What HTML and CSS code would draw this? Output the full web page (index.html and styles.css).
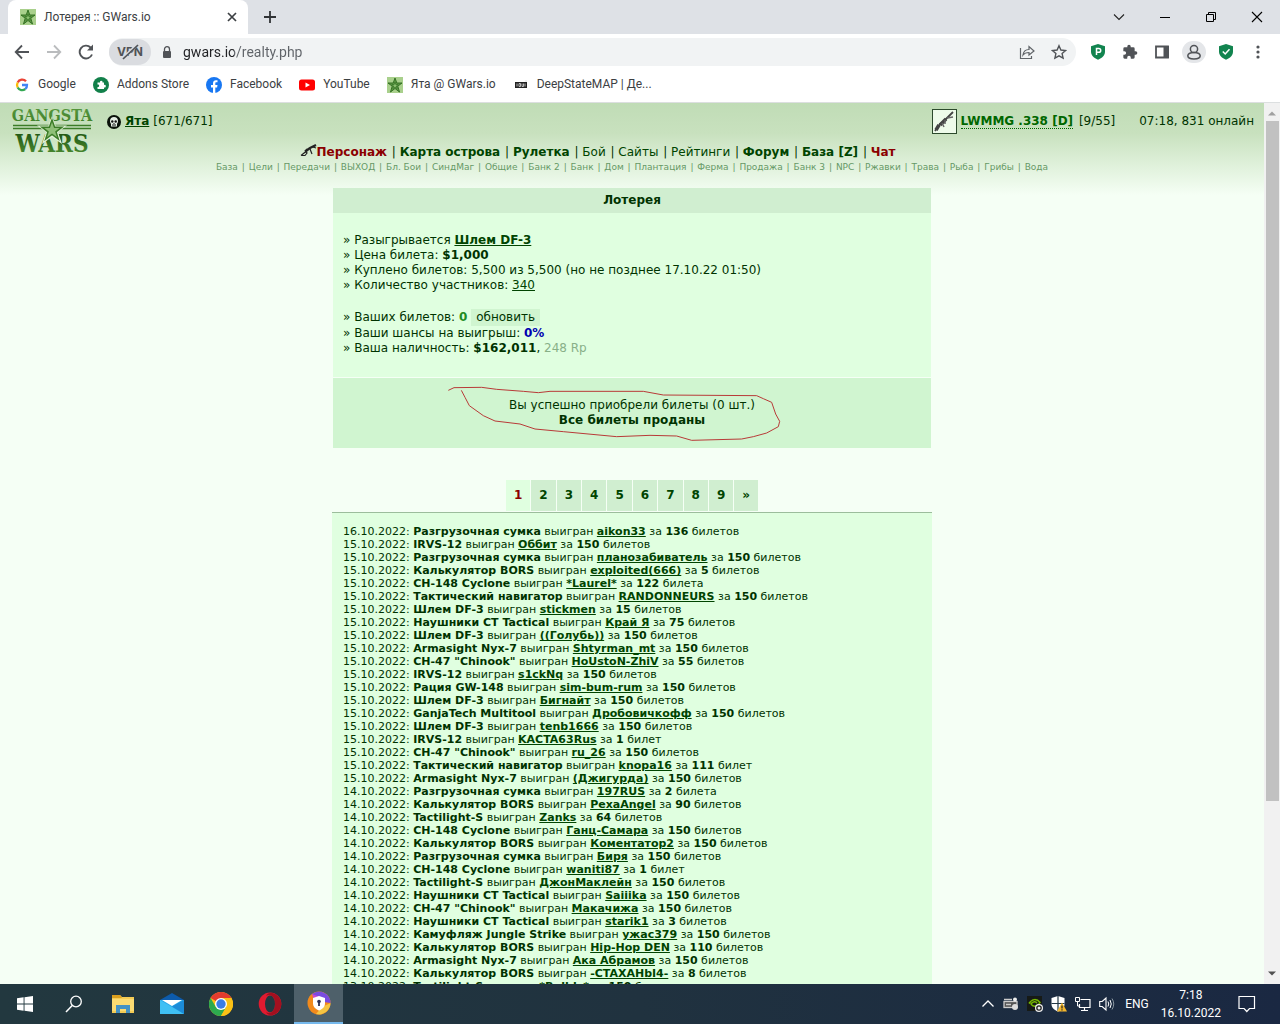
FILE: index.html
```html
<!DOCTYPE html>
<html lang="ru">
<head>
<meta charset="utf-8">
<title>Лотерея :: GWars.io</title>
<link rel="stylesheet" href="styles.css">
</head>
<body>
<svg class="defs" width="0" height="0" aria-hidden="true">
  <symbol id="star" viewBox="0 0 16 16">
    <rect width="16" height="16" fill="#a9d08c"/>
    <path d="M8 1l1.800 5H15l-4.200 3.200L12.500 15 8 11.500 3.500 15l1.700-5.800L1 6h5.200z" fill="#5f9a45" stroke="#2c6a1e" stroke-width=".9"/>
    <path d="M8 5l.8 2.500h2.400L9.300 9l.8 2.500L8 10l-2.100 1.500.8-2.500-1.900-1.500h2.400z" fill="#8cc070" stroke="#2c6a1e" stroke-width=".6"/>
  </symbol>
</svg>

<div class="tabs">
  <div class="tab">
    <svg class="i16" viewBox="0 0 16 16"><use href="#star"/></svg>
    <span class="tab-title">Лотерея :: GWars.io</span>
    <button class="ico" aria-label="Закрыть вкладку"><svg width="10" height="10" viewBox="0 0 10 10"><path d="M1 1l8 8M9 1L1 9" stroke="#3c4043" stroke-width="1.700"/></svg></button>
  </div>
  <button class="ico new-tab" aria-label="Новая вкладка"><svg width="12" height="12" viewBox="0 0 12 12"><path d="M6 0v12M0 6h12" stroke="#303336" stroke-width="1.800"/></svg></button>
  <div class="win">
    <button class="ico" aria-label="Поиск вкладок"><svg width="12" height="12" viewBox="0 0 12 12"><path d="M1 3.500l5 5 5-5" fill="none" stroke="#222" stroke-width="1.100"/></svg></button>
    <button class="ico" aria-label="Свернуть"><svg width="12" height="12" viewBox="0 0 12 12"><path d="M1 6.500h10" stroke="#000"/></svg></button>
    <button class="ico" aria-label="Окно"><svg width="12" height="12" viewBox="0 0 12 12"><path d="M1.500 3.500h7v7h-7zM3.500 3.500v-2h7v7h-2" fill="none" stroke="#000"/></svg></button>
    <button class="ico" aria-label="Закрыть"><svg width="12" height="12" viewBox="0 0 12 12"><path d="M1 1l10 10M11 1L1 11" stroke="#000" stroke-width="1.100"/></svg></button>
  </div>
</div>

<div class="toolbar">
  <button class="ico" aria-label="Назад"><svg width="16" height="16" viewBox="0 0 16 16"><path d="M15 8H2M8 1.500L1.700 8 8 14.500" fill="none" stroke="#505357" stroke-width="1.800"/></svg></button>
  <button class="ico" aria-label="Вперёд"><svg width="16" height="16" viewBox="0 0 16 16"><path d="M1 8h13M8 1.500L14.300 8 8 14.500" fill="none" stroke="#babcbe" stroke-width="1.800"/></svg></button>
  <button class="ico" aria-label="Обновить страницу"><svg width="16" height="16" viewBox="0 0 16 16"><path d="M14 10.500A6.400 6.400 0 1 1 12.600 3.500L14 5" fill="none" stroke="#505357" stroke-width="1.900"/><path d="M15 0.500v6H9z" fill="#505357"/></svg></button>
  <div class="omnibox">
    <button class="vpn" aria-label="VPN"><svg width="28" height="16" viewBox="0 0 28 16"><text x="1" y="12" font-family="Inter" font-size="12" font-weight="700" fill="#505357">VPN</text><path d="M6 15L21 1" stroke="#dadce0" stroke-width="3"/><path d="M7 15L22 1" stroke="#505357" stroke-width="1.700"/></svg></button>
    <svg class="lock" width="10" height="12" viewBox="0 0 10 12"><rect x="1" y="5" width="8" height="7" rx="1" fill="#505357"/><path d="M2.500 5V3.200a2.500 2.500 0 0 1 5 0V5" fill="none" stroke="#505357" stroke-width="1.300"/></svg>
    <input class="url" type="text" aria-label="Адрес" value="gwars.io/realty.php">
    <button class="ico" aria-label="Поделиться"><svg width="16" height="16" viewBox="0 0 16 16"><path d="M1.500 4v10.500h11V12M4 11c.5-4 3-5.500 6-5.500V2.500L15 7l-5 4V8.500C7.500 8.500 5.500 9 4 11z" fill="none" stroke="#606468" stroke-width="1.200"/></svg></button>
    <button class="ico" aria-label="В закладки"><svg width="16" height="16" viewBox="0 0 16 16"><path d="M8 1.700l1.900 4.300 4.700.5-3.500 3.100 1 4.600L8 11.800l-4.100 2.400 1-4.600L1.400 6.500l4.700-.5z" fill="none" stroke="#505357" stroke-width="1.400"/></svg></button>
  </div>
  <div class="ext">
    <button class="ico" aria-label="Блокировщик"><svg width="16" height="18" viewBox="0 0 16 18"><path d="M8 1l7 2.200v5.300c0 4-3 6.700-7 8.200-4-1.500-7-4.200-7-8.200V3.200z" fill="#12844f"/><path d="M6.500 12V5.500h2.300a1.900 1.900 0 0 1 0 3.800H6.500" fill="none" stroke="#fff" stroke-width="1.500"/></svg></button>
    <button class="ico" aria-label="Расширения"><svg width="16" height="16" viewBox="0 0 24 24"><path fill="#505357" d="M20.500 11H19V7a2 2 0 0 0-2-2h-4V3.500a2.500 2.500 0 0 0-5 0V5H4a2 2 0 0 0-2 2v3.800h1.500a2.700 2.700 0 0 1 0 5.400H2V20c0 1.100.9 2 2 2h3.800v-1.500a2.700 2.700 0 0 1 5.400 0V22H17a2 2 0 0 0 2-2v-4h1.500a2.500 2.500 0 0 0 0-5z"/></svg></button>
    <button class="ico" aria-label="Боковая панель"><svg width="16" height="16" viewBox="0 0 16 16"><path d="M2 2.500h12v11H2z" fill="none" stroke="#505357" stroke-width="1.800"/><path d="M9.500 2H15v12H9.500z" fill="#505357"/></svg></button>
    <button class="ico round" aria-label="Профиль"><svg width="16" height="16" viewBox="0 0 16 16"><circle cx="8" cy="5" r="3.600" fill="none" stroke="#505357" stroke-width="1.500"/><path d="M1.800 11.800C2 9.300 5 8.500 8 8.500s6 .8 6.200 3.300c0 2.200-3 3.200-6.200 3.200s-6.200-1-6.200-3.200z" fill="none" stroke="#505357" stroke-width="1.500"/></svg></button>
    <button class="ico" aria-label="Защита"><svg width="16" height="18" viewBox="0 0 16 18"><path d="M8 1l7 2.200v5.300c0 4-3 6.700-7 8.200-4-1.500-7-4.200-7-8.200V3.200z" fill="#12844f"/><path d="M4.800 8.500L7.200 11l4.300-4.800" fill="none" stroke="#fff" stroke-width="1.500"/></svg></button>
    <button class="ico" aria-label="Меню"><svg width="16" height="16" viewBox="0 0 16 16"><circle cx="8" cy="3" r="1.600" fill="#505357"/><circle cx="8" cy="8" r="1.600" fill="#505357"/><circle cx="8" cy="13" r="1.600" fill="#505357"/></svg></button>
  </div>
</div>

<nav class="bookmarks">
  <a href="#"><svg class="i16" viewBox="0 0 16 16" fill="none" stroke-width="2.300"><path d="M12 4.300A5 5 0 0 0 3.700 5.500" stroke="#ea4335"/><path d="M3.700 5.500a5 5 0 0 0 0 5" stroke="#fbbc05"/><path d="M3.700 10.500A5 5 0 0 0 11.300 12" stroke="#34a853"/><path d="M11.300 12A5 5 0 0 0 13 8H8" stroke="#4285f4"/></svg>Google</a>
  <a href="#"><svg class="i16" viewBox="0 0 16 16"><circle cx="8" cy="8" r="8" fill="#12804a"/><path d="M4.500 5.500H7a1.300 1.300 0 1 1 2.500 0H11V8a1.300 1.300 0 1 1 0 2.400V12H4.500v-2a1.300 1.300 0 1 0 0-2.500z" fill="#fff"/></svg>Addons Store</a>
  <a href="#"><svg class="i16" viewBox="0 0 16 16"><circle cx="8" cy="8" r="8" fill="#1877f2"/><path d="M7 16v-5.600H5V8h2V6.300C7 4.200 8.200 3.200 10 3.200l1.500.1v2h-1C9.500 5.300 9.300 5.800 9.300 6.500V8h2.200l-.4 2.400H9.300V16z" fill="#fff"/></svg>Facebook</a>
  <a href="#"><svg class="i16" viewBox="0 0 16 16"><rect y="2.500" width="16" height="11" rx="2.500" fill="#f00"/><path d="M6.500 5.500L11 8l-4.500 2.500z" fill="#fff"/></svg>YouTube</a>
  <a href="#"><svg class="i16" viewBox="0 0 16 16"><use href="#star"/></svg>Ята @ GWars.io</a>
  <a href="#"><svg class="i16" viewBox="0 0 16 16"><rect x="2" y="5" width="12" height="6" fill="#222"/><path d="M4 6.500v3M6 6.500h1.500v3H6zM9 6.500v3h1.500v-3M12 6.500v3M12 4h2" stroke="#ddd" stroke-width=".8" fill="none"/></svg>DeepStateMAP | Де...</a>
</nav>

<div class="view">
<main class="page">
  <header class="top">
    <div class="who">
      <svg class="logo" width="84" height="54" viewBox="0 0 84 54" role="img" aria-label="Gangsta Wars">
        <defs><linearGradient id="g1" x1="0" y1="0" x2="0" y2="1"><stop offset="0" stop-color="#5a9a40"/><stop offset="1" stop-color="#3c7d28"/></linearGradient><linearGradient id="g2" x1="0" y1="0" x2="0" y2="1"><stop offset="0" stop-color="#1c4f10"/><stop offset="1" stop-color="#4f9234"/></linearGradient></defs>
        <text x="42" y="14" text-anchor="middle" class="logo-a" fill="url(#g1)">GANGSTA</text>
        <path d="M3 18.500h78M3 21.500h78" stroke="#3c7d28" stroke-width="1.600"/>
        <text x="42" y="45" text-anchor="middle" class="logo-b" fill="url(#g2)">WARS</text>
        <path d="M42 9l3.600 9.500H57l-9 6.500 4 12-10-7-10 7 4-12-9-6.500h11.400z" fill="#e2f2d8"/>
        <path d="M42 13l2.600 7.200H52l-6 4.600 2.300 7.200-6.300-4.500-6.300 4.500 2.300-7.200-6-4.600h7.400z" fill="#8fbf78" stroke="#3c7d28" stroke-width="1.500"/>
      </svg>
      <span class="player"><svg width="14" height="14" viewBox="0 0 14 14"><circle cx="7" cy="7" r="7" fill="#0a120a"/><path d="M3 6c0-2.500 1.700-4 4-4s4 1.500 4 4c0 1.500-.6 2-1 3v2.500H4V9C3.600 8 3 7.500 3 6z" fill="#e4eee4"/><circle cx="5.300" cy="6.500" r="1.200" fill="#111"/><circle cx="8.700" cy="6.500" r="1.200" fill="#111"/><path d="M5 10h4M7 8v1" stroke="#111"/></svg> <a href="#"><b>Ята</b></a> [671/671]</span>
    </div>
    <div class="info">
      <svg width="25" height="25" viewBox="0 0 25 25"><rect x=".5" y=".5" width="24" height="24" fill="#eefbea" stroke="#2c4a2c"/><path d="M3 22l5-7 3-2 10-10" fill="none" stroke="#444" stroke-width="1.800"/><path d="M4 21l3-5M8 16l6-6" stroke="#444" stroke-width="3.500"/><path d="M10 14l2 4M15 9l6-1M13 11v4" stroke="#666" stroke-width="1.500"/></svg>
      <span class="gun"><a href="#">LWMMG .338 [D]</a> [9/55]</span>
      <span>07:18, 831 онлайн</span>
    </div>
  </header>

  <nav class="menu">
    <svg width="17" height="13" viewBox="0 0 17 13"><path d="M5 7.500l5-3.500 6-3" fill="none" stroke="#222" stroke-width="2.200"/><path d="M1 11.500l5-4 1 1.500-2 2.500H1M10 5l2 5M6 5l2 2M13 3l3 1" fill="none" stroke="#222" stroke-width="1.200"/></svg><a class="red" href="#">Персонаж</a> | <a class="b" href="#">Карта острова</a> | <a class="b" href="#">Рулетка</a> | <a href="#">Бой</a> | <a href="#">Сайты</a> | <a href="#">Рейтинги</a> | <a class="b" href="#">Форум</a> | <a class="b" href="#">База [Z]</a> | <a class="red" href="#">Чат</a>
  </nav>
  <nav class="submenu"><a href="#">База</a> | <a href="#">Цели</a> | <a href="#">Передачи</a> | <a href="#">ВЫХОД</a> | <a href="#">Бл. Бои</a> | <a href="#">СиндМаг</a> | <a href="#">Общие</a> | <a href="#">Банк 2</a> | <a href="#">Банк</a> | <a href="#">Дом</a> | <a href="#">Плантация</a> | <a href="#">Ферма</a> | <a href="#">Продажа</a> | <a href="#">Банк 3</a> | <a href="#">NPC</a> | <a href="#">Ржавки</a> | <a href="#">Трава</a> | <a href="#">Рыба</a> | <a href="#">Грибы</a> | <a href="#">Вода</a></nav>

  <section class="lottery">
    <h1>Лотерея</h1>
    <div class="facts">
      <p>» Разыгрывается <a href="#"><b>Шлем DF-3</b></a></p>
      <p>» Цена билета: <b>$1,000</b></p>
      <p>» Куплено билетов: 5,500 из 5,500 (но не позднее 17.10.22 01:50)</p>
      <p>» Количество участников: <a href="#">340</a></p>
      <p class="mine">» Ваших билетов: <b class="green">0</b> <button class="refresh">обновить</button></p>
      <p>» Ваши шансы на выигрыш: <b class="blue">0%</b></p>
      <p>» Ваша наличность: <b>$162,011</b>, <span class="rp">248 Rp</span></p>
    </div>
    <div class="message">
      <p>Вы успешно приобрели билеты (0 шт.)</p>
      <p><b>Все билеты проданы</b></p>
      <svg class="scribble" viewBox="9 582 1794 210" aria-hidden="true"><path d="M355 619L372 611 455 610 500 616 580 622 625 626 660 622 940 622 1000 633 1280 635 1300 644 1325 655 1337 690 1349 712 1345 728 1310 747 1270 758 1235 765 1085 769 1040 756 960 754 860 758 700 743 615 735 570 720 495 711 460 695 418 665 405 640 394 619" fill="none" stroke="#b83a38" stroke-width="3"/></svg>
    </div>
  </section>

  <nav class="pager"><a class="current" href="#">1</a><a href="#">2</a><a href="#">3</a><a href="#">4</a><a href="#">5</a><a href="#">6</a><a href="#">7</a><a href="#">8</a><a href="#">9</a><a href="#">»</a></nav>

  <ul class="winners">
    <li>16.10.2022: <b>Разгрузочная сумка</b> выигран <a href="#">aikon33</a> за <b>136</b> билетов</li>
    <li>15.10.2022: <b>IRVS-12</b> выигран <a href="#">Оббит</a> за <b>150</b> билетов</li>
    <li>15.10.2022: <b>Разгрузочная сумка</b> выигран <a href="#">планозабиватель</a> за <b>150</b> билетов</li>
    <li>15.10.2022: <b>Калькулятор BORS</b> выигран <a href="#">exploited(666)</a> за <b>5</b> билетов</li>
    <li>15.10.2022: <b>CH-148 Cyclone</b> выигран <a href="#">*Laurel*</a> за <b>122</b> билета</li>
    <li>15.10.2022: <b>Тактический навигатор</b> выигран <a href="#">RANDONNEURS</a> за <b>150</b> билетов</li>
    <li>15.10.2022: <b>Шлем DF-3</b> выигран <a href="#">stickmen</a> за <b>15</b> билетов</li>
    <li>15.10.2022: <b>Наушники CT Tactical</b> выигран <a href="#">Край Я</a> за <b>75</b> билетов</li>
    <li>15.10.2022: <b>Шлем DF-3</b> выигран <a href="#">((Голубь))</a> за <b>150</b> билетов</li>
    <li>15.10.2022: <b>Armasight Nyx-7</b> выигран <a href="#">Shtyrman_mt</a> за <b>150</b> билетов</li>
    <li>15.10.2022: <b>CH-47 "Chinook"</b> выигран <a href="#">HoUstoN-ZhiV</a> за <b>55</b> билетов</li>
    <li>15.10.2022: <b>IRVS-12</b> выигран <a href="#">s1ckNq</a> за <b>150</b> билетов</li>
    <li>15.10.2022: <b>Рация GW-148</b> выигран <a href="#">sim-bum-rum</a> за <b>150</b> билетов</li>
    <li>15.10.2022: <b>Шлем DF-3</b> выигран <a href="#">Бигнайт</a> за <b>150</b> билетов</li>
    <li>15.10.2022: <b>GanjaTech Multitool</b> выигран <a href="#">Дробовичкофф</a> за <b>150</b> билетов</li>
    <li>15.10.2022: <b>Шлем DF-3</b> выигран <a href="#">tenb1666</a> за <b>150</b> билетов</li>
    <li>15.10.2022: <b>IRVS-12</b> выигран <a href="#">KACTA63Rus</a> за <b>1</b> билет</li>
    <li>15.10.2022: <b>CH-47 "Chinook"</b> выигран <a href="#">ru_26</a> за <b>150</b> билетов</li>
    <li>15.10.2022: <b>Тактический навигатор</b> выигран <a href="#">knopa16</a> за <b>111</b> билет</li>
    <li>15.10.2022: <b>Armasight Nyx-7</b> выигран <a href="#">(Джигурда)</a> за <b>150</b> билетов</li>
    <li>14.10.2022: <b>Разгрузочная сумка</b> выигран <a href="#">197RUS</a> за <b>2</b> билета</li>
    <li>14.10.2022: <b>Калькулятор BORS</b> выигран <a href="#">PexaAngel</a> за <b>90</b> билетов</li>
    <li>14.10.2022: <b>Tactilight-S</b> выигран <a href="#">Zanks</a> за <b>64</b> билетов</li>
    <li>14.10.2022: <b>CH-148 Cyclone</b> выигран <a href="#">Ганц-Самара</a> за <b>150</b> билетов</li>
    <li>14.10.2022: <b>Калькулятор BORS</b> выигран <a href="#">Коментатор2</a> за <b>150</b> билетов</li>
    <li>14.10.2022: <b>Разгрузочная сумка</b> выигран <a href="#">Биря</a> за <b>150</b> билетов</li>
    <li>14.10.2022: <b>CH-148 Cyclone</b> выигран <a href="#">waniti87</a> за <b>1</b> билет</li>
    <li>14.10.2022: <b>Tactilight-S</b> выигран <a href="#">ДжонМаклейн</a> за <b>150</b> билетов</li>
    <li>14.10.2022: <b>Наушники CT Tactical</b> выигран <a href="#">Saiiika</a> за <b>150</b> билетов</li>
    <li>14.10.2022: <b>CH-47 "Chinook"</b> выигран <a href="#">Макачижа</a> за <b>150</b> билетов</li>
    <li>14.10.2022: <b>Наушники CT Tactical</b> выигран <a href="#">starik1</a> за <b>3</b> билетов</li>
    <li>14.10.2022: <b>Камуфляж Jungle Strike</b> выигран <a href="#">ужас379</a> за <b>150</b> билетов</li>
    <li>14.10.2022: <b>Калькулятор BORS</b> выигран <a href="#">Hip-Hop DEN</a> за <b>110</b> билетов</li>
    <li>14.10.2022: <b>Armasight Nyx-7</b> выигран <a href="#">Ака Абрамов</a> за <b>150</b> билетов</li>
    <li>14.10.2022: <b>Калькулятор BORS</b> выигран <a href="#">-CTAXAHbI4-</a> за <b>8</b> билетов</li>
    <li>13.10.2022: <b>Tactilight-S</b> выигран <a href="#">*Bulblc*</a> за <b>150</b> билетов</li>
  </ul>
</main>
<div class="scroll" aria-hidden="true">
  <svg width="8" height="5" viewBox="0 0 8 5"><path d="M0 4.500h8L4 .5z" fill="#a0a0a0"/></svg>
  <div class="thumb"></div>
  <svg width="8" height="5" viewBox="0 0 8 5"><path d="M0 .5h8L4 4.500z" fill="#505050"/></svg>
</div>
</div>

<footer class="taskbar">
  <button aria-label="Пуск"><svg width="16" height="16" viewBox="0 0 16 16"><path d="M0 2.300l6.600-1v6.300H0zM7.500 1.200L16 0v7.600H7.500zM0 8.500h6.600v6.200L0 13.800zM7.500 8.500H16V16l-8.500-1.200z" fill="#fff"/></svg></button>
  <button aria-label="Поиск"><svg width="18" height="18" viewBox="0 0 18 18"><circle cx="11" cy="6.500" r="5.300" fill="none" stroke="#fff" stroke-width="1.300"/><path d="M7.200 10.500L1 17" stroke="#fff" stroke-width="1.500"/></svg></button>
  <button aria-label="Проводник"><svg width="22" height="20" viewBox="0 0 22 20"><path d="M0 1h8l2 2h12v16H0z" fill="#f3cb55"/><path d="M0 1h8l2 3H0z" fill="#d99e1e"/><path d="M0 5h22v12H0z" fill="#fbdb72"/><path d="M4 19v-8h14v8h-4v-4H8v4z" fill="#4492c4"/></svg></button>
  <button aria-label="Почта"><svg width="24" height="24" viewBox="0 0 24 24"><path d="M0 8l12-7 12 7v4H0z" fill="#0d5bab"/><path d="M0 8h24v14H0z" fill="#29a8e8"/><path d="M0 8l24 14H0z" fill="#3fc0f4"/><path d="M2 8h20l-10 6z" fill="#fff"/><path d="M12 14.500L24 8v14z" fill="#1c8cd8"/></svg></button>
  <button aria-label="Chrome"><svg width="24" height="24" viewBox="0 0 24 24"><circle cx="12" cy="12" r="12" fill="#fbc116"/><path d="M12 12L1.600 6A12 12 0 0 1 22.400 6H12z" fill="#e33b2e"/><path d="M1.600 6A12 12 0 0 0 12 24l5.200-9L12 12 6.800 15z" fill="#2da94f"/><path d="M12 6h10.400A12 12 0 0 1 12 24l5.200-9z" fill="#fbc116"/><circle cx="12" cy="12" r="6" fill="#fff"/><circle cx="12" cy="12" r="4.700" fill="#3b7de8"/></svg></button>
  <button aria-label="Opera"><svg width="24" height="24" viewBox="0 0 24 24"><ellipse cx="12" cy="12" rx="11.300" ry="11.500" fill="#e01b30"/><path d="M14 .7a11.500 11.500 0 0 1 0 22.600c-3 0-5-1-6-3 6 3 9-3 9-8.300S14 1 8 3.700c1-2 3-3 6-3z" fill="#a3101f"/><ellipse cx="12" cy="12" rx="5" ry="8.500" fill="#22383f"/></svg></button>
  <button class="active" aria-label="Браузер"><svg width="24" height="24" viewBox="0 0 24 24"><circle cx="12" cy="12" r="11.500" fill="#f28a1c"/><path d="M5 3a11.500 11.500 0 0 1 18.500 9l-7-1z" fill="#7a4be0"/><path d="M23.500 12A11.500 11.500 0 0 1 9 23l6-7z" fill="#f5c542"/><path d="M5 3l8 3-6 3z" fill="#c94ad0"/><path d="M12 5l6 2v5c0 4-2.500 6-6 7.500C8.500 18 6 16 6 12V7z" fill="#fff"/><circle cx="12" cy="10.500" r="1.800" fill="#2b2f55"/><path d="M12 11v4" stroke="#2b2f55" stroke-width="1.800"/></svg></button>
  <div class="tray">
    <svg width="14" height="16" viewBox="0 0 14 16"><path d="M1.500 10.500L7 5l5.500 5.500" fill="none" stroke="#fff" stroke-width="1.300"/></svg>
    <svg width="16" height="16" viewBox="0 0 16 16"><rect x="1" y="5.500" width="13" height="6" fill="#555" stroke="#ccc" stroke-width="1.300"/><path d="M1 3.500h8M3 8.500h5" stroke="#ccc" stroke-width="1.300"/><circle cx="12" cy="3.500" r="2" fill="#eee"/><circle cx="12" cy="11" r="3" fill="#ddd"/></svg>
    <svg width="16" height="16" viewBox="0 0 16 16"><rect width="15" height="15" fill="#161a16"/><path d="M2 7.500c3-5 8-5 11-1-2 4-7 5-9 1.500 2-3 5-3 6-.8" fill="none" stroke="#76b900" stroke-width="1.500"/><circle cx="12" cy="12" r="4" fill="#eee"/><circle cx="12" cy="12" r="2.800" fill="#222"/><circle cx="12" cy="12" r="1.500" fill="#eee"/></svg>
    <svg width="16" height="16" viewBox="0 0 16 16"><path d="M7 0l6.500 2v6c0 4-3 6-6.500 7.500C3.500 14 .5 12 .5 8V2z" fill="#fff"/><path d="M7 0v15M.5 7.500h13" stroke="#243845" stroke-width="1.200"/><path d="M11 6.500l5 9H6z" fill="#f5b82e"/><path d="M11 9.500v3M11 13.300v1.200" stroke="#222" stroke-width="1.200"/></svg>
    <svg width="16" height="16" viewBox="0 0 16 16"><path d="M5.500 3.500H15v8H4.500V8M9.500 11.500v3M6 14.500h7" fill="none" stroke="#fff" stroke-width="1.200"/><path d="M.5 1.500h4v4h-4zM2.500 6v4h2" fill="none" stroke="#fff"/></svg>
    <svg width="16" height="16" viewBox="0 0 16 16"><path d="M.7 5.500h2.500L7 2v12l-3.800-3.500H.7z" fill="none" stroke="#fff" stroke-width="1.100"/><path d="M9 5.500q1.500 2.500 0 5M11 4q2.500 4 0 8" fill="none" stroke="#fff"/><path d="M13 2.500q3.500 5.500 0 11" fill="none" stroke="#8a97a0"/></svg>
    <span class="lang">ENG</span>
    <span class="clock">7:18<br>16.10.2022</span>
    <svg class="note" width="18" height="18" viewBox="0 0 18 18"><path d="M1 1.500h15.500v12h-5l-2.700 3-2.700-3H1z" fill="none" stroke="#fff" stroke-width="1.200"/></svg>
  </div>
</footer>
</body>
</html>
```
FILE: styles.css
```css
* { box-sizing: border-box; }
body {
  margin: 0;
  height: 100vh;
  display: flex;
  flex-direction: column;
  overflow: hidden;
  font: 12px/15px "DejaVu Sans", Verdana, sans-serif;
  color: #003300;
  background: #f5fff5;
}
button { border: 0; padding: 0; margin: 0; background: none; font: inherit; color: inherit; }
svg { flex: none; }
p, h1, ul { margin: 0; padding: 0; }
.defs { position: absolute; }
.i16 { width: 16px; height: 16px; }
.ico { display: flex; align-items: center; justify-content: center; }

/* browser window */
.tabs, .toolbar, .bookmarks { font-family: Roboto, "Noto Sans", sans-serif; color: #3c4043; }
.tabs { display: flex; align-items: center; background: #dee1e6; padding-left: 8px; height: 34px; flex: none; }
.tab { display: flex; align-items: center; gap: 8px; width: 240px; height: 34px; padding: 0 11px 0 12px; background: #fff; border-radius: 8px 8px 0 0; }
.tab-title { flex: 1; }
.new-tab { margin-left: 16px; }
.win { margin-left: auto; display: flex; height: 28px; }
.win button { width: 46px; }
.toolbar { display: flex; align-items: center; gap: 16px; height: 36px; padding: 0 16px 0 14px; background: #fff; flex: none; }
.omnibox { flex: 1; display: flex; align-items: center; gap: 16px; height: 28px; margin-left: -1px; padding-right: 9px; border-radius: 14px; background: #f1f3f4; }
.vpn { width: 42px; height: 26px; border-radius: 13px; background: #dadce0; display: flex; align-items: center; justify-content: center; }
.lock { margin: 0 -5px; }
.url {
  flex: 1; min-width: 0; border: 0; padding: 0; outline: 0;
  font: 14px/20px Roboto, "Noto Sans", sans-serif;
  color: transparent;
  background: linear-gradient(90deg, #202124 51px, #5f6368 51px);
  -webkit-background-clip: text; background-clip: text;
}
.ext { display: flex; gap: 8px; align-items: center; }
.ext .ico { width: 24px; height: 22px; }
.ext .round { border-radius: 11px; background: #e4e6e9; }
.ext { margin-left: -6px; }
.ext .ico:last-child { margin-right: -6px; }
.bookmarks { display: flex; align-items: center; gap: 17px; height: 33px; padding: 0 14px 3px; background: #fff; border-bottom: 1px solid #dcdfe0; flex: none; }
.bookmarks a { display: flex; align-items: center; gap: 8px; color: #3c4043; text-decoration: none; }

/* page viewport */
.view { flex: 1; min-height: 0; display: flex; overflow: hidden; }
.page { flex: 1; min-width: 0; overflow: hidden; padding: 4px 10px 0; background: linear-gradient(#c0dcb6 0, #c8e1be 30px, #f5fff5 92px); }
.page a { color: #004400; }
.scroll { width: 16px; background: #f1f1f1; display: flex; flex-direction: column; align-items: center; padding: 8px 0; gap: 5px; }
.thumb { width: 13px; height: 680px; flex: none; background: #c1c1c1; }
.scroll svg:last-child { margin-top: auto; }

.top { display: flex; justify-content: space-between; height: 37px; }
.who, .info { display: flex; align-items: flex-start; }
.who { gap: 13px; }
.player { display: flex; gap: 4px; align-items: center; padding-top: 7px; }
.logo-a { font: bold 16px "DejaVu Serif Condensed", "DejaVu Serif", serif; }
.logo-b { font: bold 24px "DejaVu Serif Condensed", "DejaVu Serif", serif; }
.info { gap: 4px; padding-top: 2px; }
.info span { padding-top: 5px; }
.info .gun { margin-right: 20px; }
.page .gun a { color: #006600; font-weight: bold; text-decoration: none; border-bottom: 1px dotted #006600; margin-right: 2px; }

.menu, .submenu { text-align: center; }
.menu { padding-right: 68px; }
.menu svg { vertical-align: -1px; }
.menu a { margin-right: 1px; }
.menu a, .page .submenu a { text-decoration: none; }
.page .red { color: #8b0000; font-weight: bold; }
.b { font-weight: bold; }
.submenu, .page .submenu a { color: #669966; }
.submenu { font-size: 9px; }
.submenu a { margin: 0 1px; }

.lottery, .winners { width: 600px; max-width: 100%; margin: 0 auto; }
.lottery { margin-top: 13px; padding: 0 1px; }
.lottery h1 { font-size: 12px; line-height: 15px; padding: 5px; text-align: center; background: #d0eed0; }
.facts { padding: 20px 10px 21px; margin-bottom: 1px; background: #e0ffe0; }
.mine { margin-top: 15px; line-height: 18px; }
.refresh { padding: 1px 5px; background: #d0f5d0; line-height: 15px; }
.green { color: #228b22; }
.blue { color: #0000b0; }
.rp { color: #88b088; }
.message { position: relative; padding: 20px; text-align: center; background: #d0f5d0; }
.scribble { position: absolute; left: 0; top: 0; width: 598px; height: 70px; }

.pager { display: flex; justify-content: center; gap: 1px; margin: 32px 0 1px; }
.pager a { padding: 8px; background: #d0eed0; font-weight: bold; text-decoration: none; }
.page .pager .current { color: #8b0000; background: #e0ffe0; }

.winners { list-style: none; padding: 12px 11px 20px; border-top: 1px solid #9cbd9c; background: #e0ffe0; font-size: 11px; line-height: 13px; }
.winners a { font-weight: bold; }

/* desktop taskbar */
.taskbar { display: flex; height: 40px; flex: none; color: #fff; background: linear-gradient(90deg, #22383f, #20323f 50%, #1a2842); font: 12px/18px Roboto, "Noto Sans", sans-serif; }
.taskbar button { width: 49px; display: flex; align-items: center; justify-content: center; }
.taskbar .active { background: #4e606a; border-bottom: 2px solid #76b9ed; }
.tray { margin-left: auto; display: flex; align-items: center; gap: 8px; padding-right: 24px; }
.lang { margin-left: 2px; }
.clock { text-align: center; margin: 0 9px 0 4px; }
```
